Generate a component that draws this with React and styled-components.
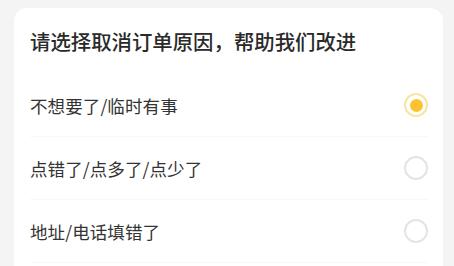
import { useState } from "react";
import styled, { createGlobalStyle } from "styled-components";

const reasons = ["不想要了/临时有事", "点错了/点多了/点少了", "地址/电话填错了"];

export default function App() {
  const [picked, setPicked] = useState(0);

  return (
    <>
      <GlobalStyle />
      <Page>
        <Card>
          <Title>请选择取消订单原因，帮助我们改进</Title>
          {reasons.map((text, i) => (
            <Row key={text} onClick={() => setPicked(i)}>
              <Label>{text}</Label>
              <Radio checked={picked === i} />
            </Row>
          ))}
        </Card>
      </Page>
    </>
  );
}

const GlobalStyle = createGlobalStyle`
  html, body {
    margin: 0;
    padding: 0;
    background: #f4f4f4;
  }
  body {
    font-family: "Noto Sans CJK SC", "Noto Sans", sans-serif;
  }
`;

const Page = styled.div`
  padding: 8px 11px 0 14px;
  height: 266px;
  box-sizing: border-box;
  overflow: hidden;
`;

const Card = styled.div`
  background: #ffffff;
  border-radius: 13px;
  padding: 0 15px 0 16px;
  min-height: 300px;
`;

const Title = styled.div`
  padding: 20px 0 20px;
  font-size: 20.4px;
  line-height: 26px;
  font-weight: 500;
  color: #2a2a2a;
`;

const Row = styled.div`
  display: flex;
  align-items: center;
  justify-content: space-between;
  height: 63px;
  box-sizing: border-box;
  border-bottom: 1px solid #f8f8f8;
  cursor: pointer;
`;

const Label = styled.span`
  font-size: 17.5px;
  color: #333333;
  letter-spacing: 0.1px;
`;

const Radio = styled.span`
  width: 24px;
  height: 24px;
  box-sizing: border-box;
  border-radius: 50%;
  border: 2px solid ${(p) => (p.checked ? "#f5e6a4" : "#e4e4e4")};
  display: flex;
  align-items: center;
  justify-content: center;
  &::after {
    content: "";
    display: ${(p) => (p.checked ? "block" : "none")};
    width: 13px;
    height: 13px;
    border-radius: 50%;
    background: #fcc330;
  }
`;
